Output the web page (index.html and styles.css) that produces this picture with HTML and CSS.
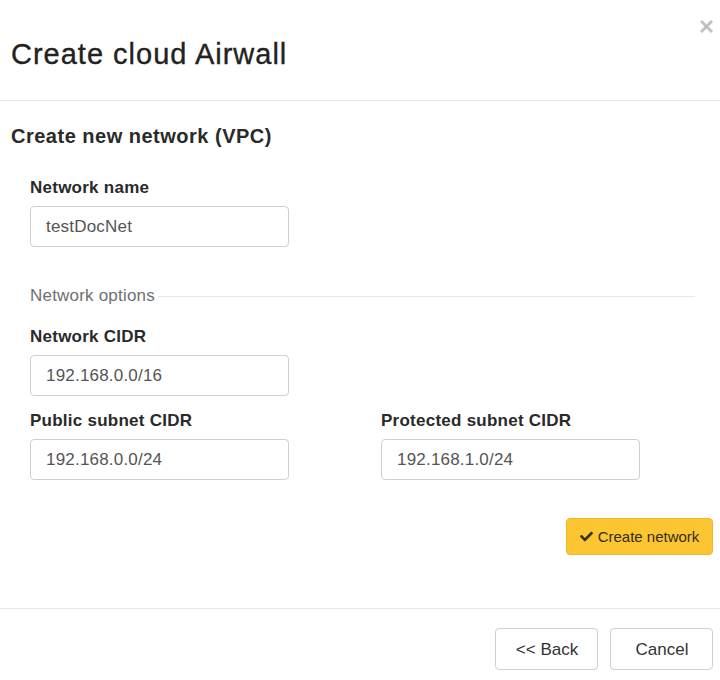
FILE: index.html
```html
<!DOCTYPE html>
<html>
<head>
<meta charset="utf-8">
<link rel="stylesheet" href="styles.css">
</head>
<body>
<div class="modal">
  <header class="modal-header">
    <h2 class="modal-title">Create cloud Airwall</h2>
    <button class="close" aria-label="Close">
      <svg viewBox="0 0 13 13" width="13" height="13"><path d="M2 2 L11 11 M11 2 L2 11" stroke="#c2c2c2" stroke-width="3" stroke-linecap="square"/></svg>
    </button>
  </header>
  <main class="modal-body">
    <h3 class="section-title">Create new network (VPC)</h3>
    <div class="form">
      <div class="field">
        <label class="label">Network name</label>
        <input class="input" type="text" value="testDocNet">
      </div>
      <div class="legend"><span class="legend-text">Network options</span><span class="legend-line"></span></div>
      <div class="field field-cidr">
        <label class="label">Network CIDR</label>
        <input class="input" type="text" value="192.168.0.0/16">
      </div>
      <div class="row">
        <div class="field">
          <label class="label">Public subnet CIDR</label>
          <input class="input" type="text" value="192.168.0.0/24">
        </div>
        <div class="field">
          <label class="label">Protected subnet CIDR</label>
          <input class="input" type="text" value="192.168.1.0/24">
        </div>
      </div>
    </div>
    <div class="actions">
      <button class="btn btn-warning">
        <svg class="check" viewBox="0 0 512 512" width="13" height="13"><path fill="#3b3215" d="M173.898 439.404l-166.4-166.4c-9.997-9.997-9.997-26.206 0-36.204l36.203-36.204c9.997-9.998 26.207-9.998 36.204 0L192 312.69 432.095 72.596c9.997-9.997 26.207-9.997 36.204 0l36.203 36.204c9.997 9.997 9.997 26.206 0 36.204l-294.4 294.401c-9.998 9.997-26.207 9.997-36.204-.001z"/></svg>
        <span>Create network</span>
      </button>
    </div>
  </main>
  <footer class="modal-footer">
    <button class="btn btn-default">&lt;&lt; Back</button>
    <button class="btn btn-default btn-cancel">Cancel</button>
  </footer>
</div>
</body>
</html>
```

FILE: styles.css
```css
* { box-sizing: border-box; }
html, body {
  margin: 0;
  padding: 0;
  background: #fff;
}
body {
  font-family: "Liberation Sans", Arial, sans-serif;
  color: #333;
}
.modal {
  width: 720px;
  height: 680px;
  display: flex;
  flex-direction: column;
  overflow: hidden;
}
.modal-header {
  position: relative;
  height: 101px;
  padding: 36px 12px 0 11px;
  border-bottom: 1px solid #e6e6e6;
}
.modal-title {
  margin: 0;
  font-size: 29px;
  line-height: 36px;
  font-weight: normal;
  letter-spacing: 1px;
  color: #222;
  -webkit-text-stroke: 0.35px #222;
}
.close {
  position: absolute;
  top: 20px;
  right: 7px;
  padding: 0;
  border: 0;
  background: none;
  width: 13px;
  height: 13px;
  display: block;
}
.close svg { display: block; }
.modal-body {
  padding: 23px 7px 0 11px;
  height: 508px;
  border-bottom: 1px solid #e6e6e6;
}
.section-title {
  margin: 0;
  font-size: 20px;
  line-height: 24px;
  font-weight: bold;
  letter-spacing: 0.5px;
  color: #2a2a2a;
}
.form {
  margin: 30px 18px 0 19px;
}
.field {
  display: flex;
  flex-direction: column;
}
.label {
  font-size: 17px;
  line-height: 20px;
  font-weight: bold;
  letter-spacing: 0.25px;
  color: #2a2a2a;
  margin-bottom: 8px;
}
.input {
  width: 259px;
  height: 41px;
  border: 1px solid #cfcfcf;
  border-radius: 4px;
  padding: 0 15px;
  font-family: "Liberation Sans", Arial, sans-serif;
  font-size: 17px;
  letter-spacing: 0.2px;
  color: #555;
  background: #fff;
  outline: none;
}
.legend {
  display: flex;
  align-items: center;
  margin-top: 39px;
  height: 20px;
}
.legend-text {
  font-size: 17px;
  line-height: 20px;
  color: #707070;
  letter-spacing: 0.2px;
}
.legend-line {
  flex: 1;
  height: 1px;
  background: #e8e8e8;
  margin-left: 3px;
}
.field-cidr {
  margin-top: 21px;
}
.row {
  display: grid;
  grid-template-columns: 351px 1fr;
  margin-top: 15px;
}
.actions {
  display: flex;
  justify-content: flex-end;
  margin-top: 38px;
}
.btn {
  font-family: "Liberation Sans", Arial, sans-serif;
  border-radius: 4px;
  cursor: pointer;
  display: inline-flex;
  align-items: center;
  justify-content: center;
}
.btn-warning {
  width: 147px;
  height: 37px;
  background: #fbc631;
  border: 1px solid #eeb62a;
  color: #352d12;
  font-size: 15px;
  gap: 5px;
  padding: 0;
}
.check { display: block; }
.modal-footer {
  display: flex;
  justify-content: flex-end;
  gap: 12px;
  padding: 19px 7px 0 0;
  flex: 1;
}
.btn-default {
  width: 103px;
  height: 42px;
  background: #fff;
  border: 1px solid #cfcfcf;
  color: #333;
  font-size: 17px;
  padding: 0 0 0 1px;
  line-height: 1;
}
```
